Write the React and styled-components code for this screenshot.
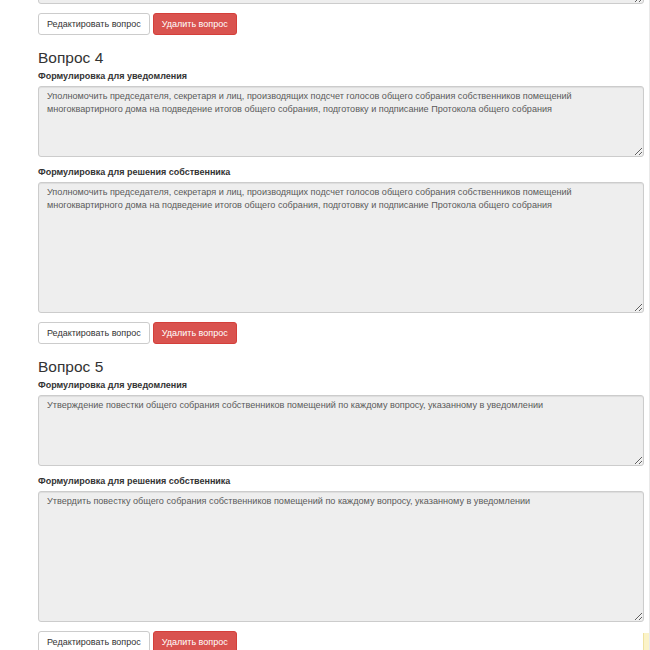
import React from "react";
import styled, { createGlobalStyle } from "styled-components";

const Global = createGlobalStyle`
  html, body { margin: 0; padding: 0; background: #fff; }
  body { font-family: "Liberation Sans", Arial, sans-serif; color: #333; }
`;

const Page = styled.div`
  position: relative;
  box-sizing: border-box;
  width: 650px;
  min-height: 650px;
  padding: 0 6px 0 38px;
  border-right: 1px solid #e9e9e9;
  overflow: hidden;
`;

const Container = styled.div`
  width: 606px;
`;

const Clip = styled.div`
  height: 4px;
  overflow: hidden;
  display: flex;
  flex-direction: column;
  justify-content: flex-end;
`;

const Question = styled.section`
  display: flex;
  flex-direction: column;
`;

const Title = styled.h3`
  margin: 14px 0 4px;
  font-size: 15.5px;
  line-height: 17px;
  font-weight: normal;
  color: #333;
`;

const Group = styled.div`
  display: flex;
  flex-direction: column;
  margin-bottom: ${(p) => p.$mb}px;
`;

const Label = styled.label`
  display: block;
  font-size: 9px;
  line-height: 13px;
  font-weight: bold;
  color: #333;
  margin-bottom: 3px;
`;

const Area = styled.textarea`
  box-sizing: border-box;
  display: block;
  flex-shrink: 0;
  width: 606px;
  height: ${(p) => p.$h}px;
  margin: 0;
  padding: 3px 8px;
  font-family: "Liberation Sans", Arial, sans-serif;
  font-size: 9.1px;
  line-height: 13px;
  color: #5a5a5a;
  background: #eee;
  border: 1px solid #ccc;
  border-radius: 3px;
  box-shadow: inset 0 1px 1px rgba(0, 0, 0, 0.075);
  outline: none;
  resize: vertical;
`;

const Actions = styled.div`
  display: flex;
  gap: 3px;
  margin-top: ${(p) => p.$mt}px;
`;

const Button = styled.button`
  box-sizing: border-box;
  height: 22px;
  padding: 4px 8px;
  font-family: "Liberation Sans", Arial, sans-serif;
  font-size: 9px;
  line-height: 12px;
  border-radius: 3px;
  border: 1px solid ${(p) => (p.$danger ? "#d43f3a" : "#ccc")};
  background: ${(p) => (p.$danger ? "#d9534f" : "#fff")};
  color: ${(p) => (p.$danger ? "#fff" : "#333")};
  cursor: pointer;
`;

const Tab = styled.div`
  position: absolute;
  right: 0;
  top: 633px;
  width: 5px;
  height: 20px;
  background: #fbf3c8;
  border-left: 1px solid #efe2a0;
`;

const q4 =
  "Уполномочить председателя, секретаря и лиц, производящих подсчет голосов общего собрания собственников помещений многоквартирного дома на подведение итогов общего собрания, подготовку и подписание Протокола общего собрания";

const questions = [
  {
    n: 4,
    notice: q4,
    decision: q4,
  },
  {
    n: 5,
    notice:
      "Утверждение повестки общего собрания собственников помещений по каждому вопросу, указанному в уведомлении",
    decision:
      "Утвердить повестку общего собрания собственников помещений по каждому вопросу, указанному в уведомлении",
  },
];

function ActionRow({ mt }) {
  return (
    <Actions $mt={mt}>
      <Button type="button">Редактировать вопрос</Button>
      <Button type="button" $danger>
        Удалить вопрос
      </Button>
    </Actions>
  );
}

export default function App() {
  return (
    <>
      <Global />
      <Page>
        <Container>
          <Clip>
            <Area $h={131} readOnly value="" />
          </Clip>
          <ActionRow mt={9} />
          {questions.map((q) => (
            <Question key={q.n}>
              <Title>Вопрос {q.n}</Title>
              <Group $mb={9}>
                <Label>Формулировка для уведомления</Label>
                <Area $h={71} readOnly value={q.notice} />
              </Group>
              <Group $mb={0}>
                <Label>Формулировка для решения собственника</Label>
                <Area $h={131} readOnly value={q.decision} />
              </Group>
              <ActionRow mt={9} />
            </Question>
          ))}
        </Container>
        <Tab />
      </Page>
    </>
  );
}
